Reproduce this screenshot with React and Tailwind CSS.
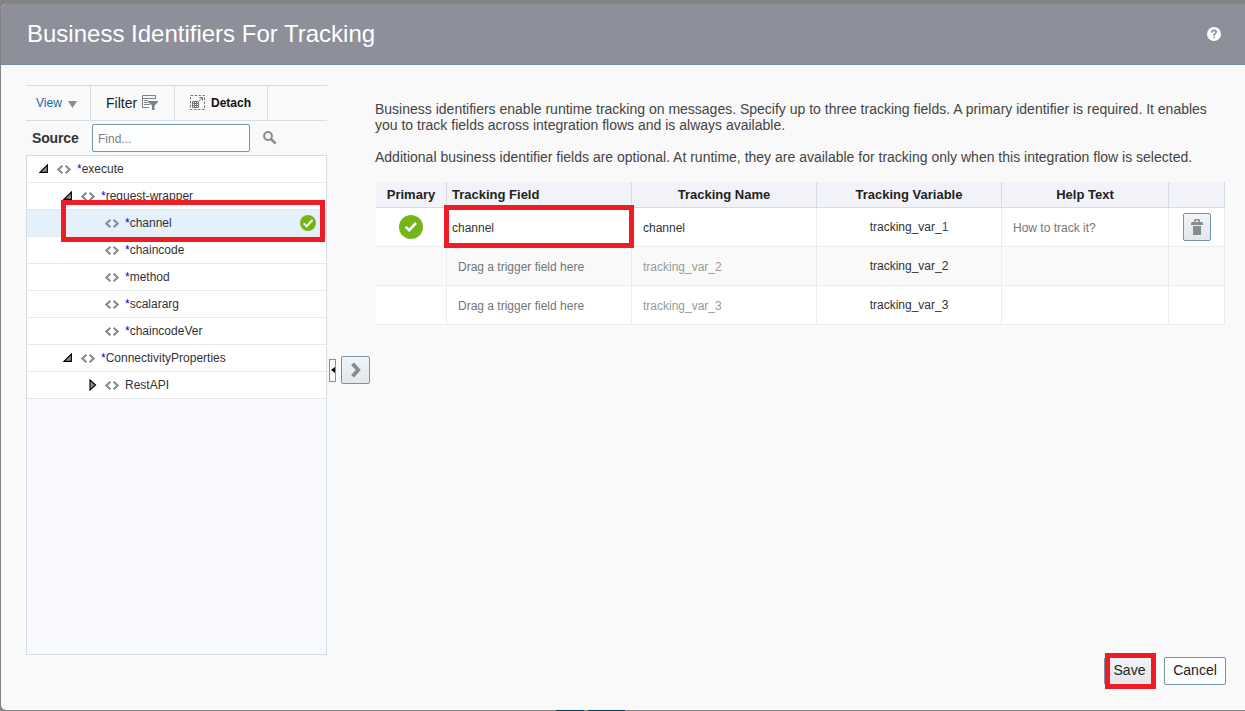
import React from "react";

function CodeIcon() {
  return (
    <svg width="14" height="9" viewBox="0 0 14 9" className="shrink-0" fill="none" stroke="#878c90" strokeWidth="2.1">
      <path d="M5.4 0.8 1.4 4.5 5.4 8.2M8.6 0.8 12.6 4.5 8.6 8.2" />
    </svg>
  );
}

function OpenArrow() {
  return (
    <svg width="9" height="9" viewBox="0 0 9 9" className="mb-px shrink-0">
      <path d="M8.4 1V8.4H1Z" fill="#8a8a8a" stroke="#000" strokeWidth="1.1" />
    </svg>
  );
}

function ClosedArrow() {
  return (
    <svg width="8" height="12" viewBox="0 0 8 12" className="shrink-0">
      <path d="M1 1 6.6 6 1 11Z" fill="#8a8a8a" stroke="#000" strokeWidth="1.1" />
    </svg>
  );
}

function CheckIcon({ size, path, stroke }) {
  return (
    <svg width={size} height={size} viewBox="0 0 24 24" className="shrink-0">
      <circle cx="12" cy="12" r="12" fill="#76b41b" />
      <path d={path} fill="none" stroke="#fff" strokeWidth={stroke} />
    </svg>
  );
}

function FilterIcon() {
  return (
    <svg width="17" height="15" viewBox="0 0 17 15" className="mb-px">
      <path d="M0.5 13V0.5H13.5V4M0 12.5H7M0 3.5H13M2 5.5H6M2 7.5H6M2 9.5H8" fill="none" stroke="#7d8286" />
      <path d="M6 6H16V7L12.5 10.5V15H10V10.5L6 7Z" fill="#7d8286" />
    </svg>
  );
}

function DetachIcon() {
  return (
    <svg width="15" height="15" viewBox="0 0 15 15" fill="none" stroke="#73787c" className="mb-px">
      <rect x="0.5" y="0.5" width="14" height="14" strokeDasharray="2.5 1.5" />
      <path d="M2.5 6.5H8.5V12.5H2.5ZM2 8.5H9M2 10.5H9M4.5 6V13M6.5 6V13" />
      <path d="M9 6 12 3M9.5 2.5H12.5V5.5" />
    </svg>
  );
}

const nodes = [
  { name: "execute", pad: "pl-[12px]", arrow: "open", star: true },
  { name: "request-wrapper", pad: "pl-[36px]", arrow: "open", star: true },
  { name: "channel", pad: "pl-[60px]", star: true, selected: true },
  { name: "chaincode", pad: "pl-[60px]", star: true },
  { name: "method", pad: "pl-[60px]", star: true },
  { name: "scalararg", pad: "pl-[60px]", star: true },
  { name: "chaincodeVer", pad: "pl-[60px]", star: true },
  { name: "ConnectivityProperties", pad: "pl-[36px]", arrow: "open", star: true },
  { name: "RestAPI", pad: "pl-[60px]", arrow: "closed" },
];

function TreeRow({ node }) {
  return (
    <div
      className={`flex h-[27px] items-center border-b border-[#e6eaed] pr-[10px] text-[12px] text-[#333] ${node.pad} ${
        node.selected ? "bg-[#e4f0fa]" : "bg-white"
      }`}
    >
      <span className="flex w-[18px] items-center">
        {node.arrow === "open" && <OpenArrow />}
        {node.arrow === "closed" && <span className="pl-[2px]"><ClosedArrow /></span>}
      </span>
      <span className="flex pt-px"><CodeIcon /></span>
      <span className="flex-1 whitespace-nowrap pl-[6px]">
        {node.star && <span className="text-[#0000ff]">*</span>}
        {node.name}
      </span>
      {node.selected && <CheckIcon size={16} path="M5.5 12.5 10 17 18.5 7.5" stroke={3} />}
    </div>
  );
}

function Source() {
  return (
    <section className="w-[301px] shrink-0">
      <div className="flex h-[36px] border-y border-[#d3dde5]">
        <div className="flex w-[65px] items-center gap-[6px] border-r border-[#d3dde5] pl-[10px] text-[12px] text-[#0f6cab]">
          View
          <svg width="9" height="7" viewBox="0 0 9 7" className="mt-[2px]"><path d="M0 0H9L4.5 7Z" fill="#878c90" /></svg>
        </div>
        <div className="flex w-[84px] items-center gap-[5px] border-r border-[#d3dde5] pl-[15px] text-[14px] text-[#222]">
          Filter
          <FilterIcon />
        </div>
        <div className="flex w-[93px] items-center gap-[6px] border-r border-[#d3dde5] pl-[15px] text-[12px] font-bold text-[#111]">
          <DetachIcon />
          Detach
        </div>
      </div>
      <div className="flex h-[34px] items-center pb-px">
        <span className="w-[66px] pl-[6px] pt-px text-[14px] font-bold tracking-[-0.15px] text-[#333]">Source</span>
        <input
          placeholder="Find..."
          className="h-[28px] w-[158px] rounded-[2px] border border-[#7394ab] bg-[#fcfdfe] px-[5px] pt-[2px] text-[12px] outline-none placeholder:text-[#808080]"
        />
        <svg width="14" height="14" viewBox="0 0 14 14" className="ml-[13px]" fill="none" stroke="#878c90">
          <circle cx="5" cy="5" r="3.9" strokeWidth="2" />
          <path d="M8 8 12.6 12.6" strokeWidth="2.5" />
        </svg>
      </div>
      <div className="h-[500px] border border-[#d3dde5] bg-[#f7f9fd]">
        {nodes.map((node) => (
          <TreeRow key={node.name} node={node} />
        ))}
      </div>
    </section>
  );
}

const grid = "grid grid-cols-[71px_185px_185px_185px_167px_56px]";
const head = "flex items-center justify-center border-r border-[#d3dde5]";
const cell = "flex items-center border-r border-[#eaecee]";

const rows = [
  { id: 1, field: "channel", name: "channel", variable: "tracking_var_1", help: "How to track it?", primary: true },
  { id: 2, field: "Drag a trigger field here", name: "tracking_var_2", variable: "tracking_var_2" },
  { id: 3, field: "Drag a trigger field here", name: "tracking_var_3", variable: "tracking_var_3" },
];

function TrackingTable() {
  return (
    <div className="ml-px mt-[17px] w-[849px]">
      <div className={`${grid} h-[26px] border-b border-[#d3dde5] bg-[#f2f3f8] text-[13px] font-bold text-[#222]`}>
        <div className={head}>Primary</div>
        <div className="flex items-center border-r border-[#d3dde5] pl-[5px]">Tracking Field</div>
        <div className={head}>Tracking Name</div>
        <div className={head}>Tracking Variable</div>
        <div className={head}>Help Text</div>
        <div className={head} />
      </div>
      {rows.map((row) => (
        <div key={row.id} className={`${grid} h-[39px] border-b border-[#eaecee] text-[12px] ${row.id === 2 ? "bg-[#f9f9f9]" : "bg-white"}`}>
          <div className={`${cell} justify-center`}>
            {row.primary && <CheckIcon size={24} path="M6.8 11.8 10.2 15.2 17 8" stroke={2.6} />}
          </div>
          <div className={`${cell} pt-[2px] ${row.primary ? "pl-[5px] text-[#333]" : "pl-[11px] text-[#757575]"}`}>{row.field}</div>
          <div className={`${cell} pl-[11px] pt-[2px] ${row.primary ? "text-[#333]" : "text-[#999]"}`}>{row.name}</div>
          <div className={`${cell} justify-center text-[#333]`}>
            {row.primary ? (
              <span>tracking_var_<span className="text-[#0f5cab]">1</span></span>
            ) : (
              row.variable
            )}
          </div>
          <div className={`${cell} pl-[11px] pt-[2px] text-[#757575]`}>{row.help}</div>
          <div className={`${cell} justify-center`}>
            {row.primary && (
              <button className="flex h-[28px] w-[28px] items-center justify-center rounded-[2px] border border-[#7394ab] bg-linear-to-b from-[#f2f4f6] to-[#e2e7eb]">
                <svg width="12" height="16" viewBox="0 0 12 16">
                  <path d="M0 6V4L1 3H3V1L4 0H8L9 1V3H11L12 4V6ZM4.5 3H7.5V1.5H4.5ZM2 7H10V16H2Z" fill="#878c90" fillRule="evenodd" />
                </svg>
              </button>
            )}
          </div>
        </div>
      ))}
    </div>
  );
}

export default function App() {
  return (
    <div className="relative flex h-[711px] w-[1245px] flex-col overflow-hidden bg-[#858383] pb-px pl-px pt-[4px] font-['Liberation_Sans',Arial,sans-serif]">
      <div className="flex flex-1 flex-col overflow-hidden rounded-l-[5px] bg-[#f9f9f9]">
        <header className="flex h-[61px] shrink-0 items-center justify-between border-b border-[#6d8ea8] bg-[#8d8f9b] pl-[26px] pr-[24px]">
          <h1 className="text-[24px] text-white">Business Identifiers For Tracking</h1>
          <svg width="14" height="14" viewBox="0 0 14 14">
            <circle cx="7" cy="7" r="7" fill="#fff" />
            <path d="M4.9 5.4V4.8Q5 3.4 7 3.4T9.1 5Q9.1 6 8 6.7T7 8.4V8.7M7 9.8V11.3" fill="none" stroke="#8d8f9b" strokeWidth="1.7" />
          </svg>
        </header>
        <main className="flex flex-1 items-start pl-[25px] pt-[20px]">
          <Source />
          <div className="flex items-center gap-[5px] pl-[2px] pt-[271px]">
            <button className="flex h-[23px] w-[7px] items-center justify-center border border-[#7394ab] bg-[#f9f9f9]">
              <svg width="4" height="6" viewBox="0 0 4 6"><path d="M4 0V6L0 3Z" fill="#000" /></svg>
            </button>
            <button className="flex h-[28px] w-[29px] items-center justify-center rounded-[2px] border border-[#7394ab] bg-linear-to-b from-[#f2f4f6] to-[#e2e7eb]">
              <svg width="10" height="16" viewBox="0 0 10 16" fill="none" stroke="#878c90" strokeWidth="3.8">
                <path d="M1.6 1.8 7.2 8 1.6 14.2" />
              </svg>
            </button>
          </div>
          <div className="ml-[5px] flex h-[600px] flex-1 flex-col pr-[19px] pt-[16px]">
            <p className="whitespace-nowrap text-[14px] leading-[16px] text-[#444]">
              Business identifiers enable runtime tracking on messages. Specify up to three tracking fields. A primary identifier is required. It enables
              <br />
              you to track fields across integration flows and is always available.
            </p>
            <p className="mt-[16px] whitespace-nowrap text-[14px] leading-[16px] text-[#444]">
              Additional business identifier fields are optional. At runtime, they are available for tracking only when this integration flow is selected.
            </p>
            <TrackingTable />
            <div className="mt-auto flex justify-end gap-[8px]">
              <button className="h-[28px] w-[52px] rounded-[2px] border border-[#7394ab] bg-linear-to-b from-[#f2f4f6] to-[#e2e7eb] pb-[2px] pr-px text-[14px] text-[#222]">Save</button>
              <button className="h-[28px] w-[62px] rounded-[2px] border border-[#7394ab] bg-[#fcfdfe] pb-[2px] text-[14px] text-[#222]">Cancel</button>
            </div>
          </div>
        </main>
      </div>
      <div className="pointer-events-none absolute left-[61px] top-[200px] h-[42px] w-[264px] border-[5px] border-[#ee1c25]" />
      <div className="pointer-events-none absolute left-[444px] top-[205px] h-[43px] w-[190px] border-[5px] border-[#ee1c25]" />
      <div className="pointer-events-none absolute left-[1105px] top-[653px] h-[36px] w-[51px] border-[5px] border-[#ee1c25]" />
      <div className="absolute bottom-0 left-[556px] h-px w-[28px] bg-[#003a4c]" />
      <div className="absolute bottom-0 left-[588px] h-px w-[37px] bg-[#003a4c]" />
    </div>
  );
}
